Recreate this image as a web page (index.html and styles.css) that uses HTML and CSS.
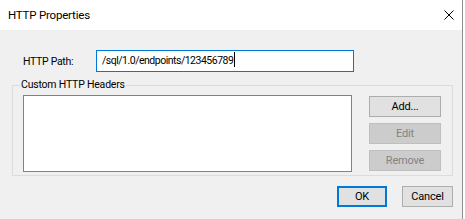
FILE: index.html
```html
<!DOCTYPE html>
<html lang="en">
<head>
    <meta charset="UTF-8">
    <title>HTTP Properties</title>
    <link rel="stylesheet" href="styles.css">
</head>
<body>
    <div class="window">
        <div class="titlebar">
            <span class="title">HTTP Properties</span>
            <svg class="close" width="10" height="10" viewBox="0 0 10 10">
                <path d="M0.5 0.5 L9.5 9.5 M9.5 0.5 L0.5 9.5" stroke="#000" stroke-width="1" fill="none"/>
            </svg>
        </div>
        <div class="content">
            <div class="path-row">
                <label class="path-label">HTTP Path:</label>
                <div class="textbox">/sql/1.0/endpoints/123456789<span class="caret"></span></div>
            </div>
            <div class="group">
                <span class="group-label">Custom HTTP Headers</span>
                <div class="listbox"></div>
                <div class="side-buttons">
                    <button class="btn">Add...</button>
                    <button class="btn" disabled>Edit</button>
                    <button class="btn" disabled>Remove</button>
                </div>
            </div>
            <div class="footer">
                <button class="btn default ok">OK</button>
                <button class="btn cancel">Cancel</button>
            </div>
        </div>
    </div>
</body>
</html>
```

FILE: styles.css
```css
html, body {
    margin: 0;
    padding: 0;
    background: #ffffff;
}
body {
    font-family: Roboto, "Noto Sans", sans-serif;
    font-size: 10.5px;
    letter-spacing: -0.3px;
    color: #000;
}
.window {
    width: 462px;
    height: 219px;
    background: #f0f0f0;
    border-right: 1px solid #8c8c8c;
}
.titlebar {
    height: 30px;
    background: #fff;
    display: flex;
    align-items: center;
    justify-content: space-between;
    padding: 0 8px 0 8px;
}
.title {
    font-size: 11.5px;
    letter-spacing: -0.2px;
}
.close {
    display: block;
    margin-top: -1px;
}
.content {
    padding: 20px 9px 0 12px;
}
.path-row {
    display: flex;
    align-items: center;
    padding-left: 11px;
}
.path-label {
    width: 73px;
}
.textbox {
    width: 251px;
    height: 20px;
    line-height: 20px;
    border: 1px solid #0078d7;
    background: #fff;
    padding-left: 5px;
    white-space: nowrap;
    letter-spacing: -0.5px;
}
.caret {
    display: inline-block;
    width: 1px;
    height: 15px;
    background: #000;
    vertical-align: -3px;
    margin-left: 1px;
}
.group {
    position: relative;
    margin-top: 13px;
    width: 439px;
    height: 89px;
    border: 1px solid #dcdcdc;
    display: flex;
    padding: 0;
}
.group-label {
    position: absolute;
    top: -9px;
    left: 7px;
    padding: 0 1px;
    background: #f0f0f0;
    line-height: 16px;
    letter-spacing: -0.2px;
}
.listbox {
    margin: 9px 0 0 10px;
    width: 327px;
    height: 75px;
    border: 1px solid #828282;
    background: #fff;
}
.side-buttons {
    margin: 10px 0 0 17px;
    display: flex;
    flex-direction: column;
    gap: 6px;
}
.btn {
    font-family: inherit;
    font-size: 11px;
    letter-spacing: -0.2px;
    color: #000;
    width: 72px;
    height: 21px;
    padding: 0;
    background: #e1e1e1;
    border: 1px solid #adadad;
    border-radius: 0;
}
.btn:disabled {
    background: #cccccc;
    border-color: #bfbfbf;
    color: #838383;
}
.footer {
    display: flex;
    justify-content: flex-end;
    gap: 15px;
    margin-top: 10px;
    width: 441px;
}
.ok {
    width: 50px;
}
.default {
    border: 2px solid #0078d7;
}
.cancel {
    width: 51px;
}
```
